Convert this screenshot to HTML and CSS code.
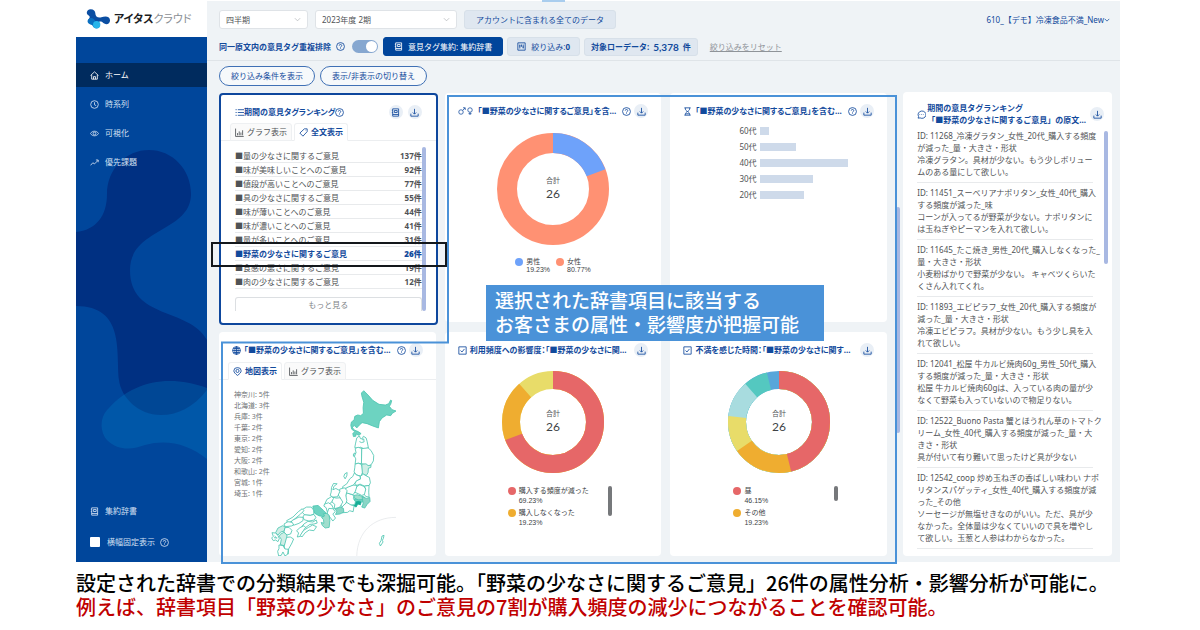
FILE: index.html
```html
<!DOCTYPE html>
<html lang="ja">
<head>
<meta charset="utf-8">
<title>アイタスクラウド</title>
<link rel="stylesheet" href="styles.css">
</head>
<body>
<svg class="defs" aria-hidden="true">
  <symbol id="i-help" viewBox="0 0 16 16"><circle cx="8" cy="8" r="7"/><path d="M5.8 6.4a2.2 2.2 0 1 1 3.2 2c-.7.4-1 .8-1 1.5M8 11.4v1.1"/></symbol>
  <symbol id="i-down" viewBox="0 0 16 16"><path d="M8 1.500v9M5 8l3 3 3-3M1.500 10v4.500h13V10"/></symbol>
  <symbol id="i-book" viewBox="0 0 16 16"><path d="M3 1.500h10.500v13H3zM3 11.500h10.500M6 4.500h5v3.500H6zM1.500 4H3M1.500 8H3"/></symbol>
  <symbol id="i-filter" viewBox="0 0 16 16"><path d="M1.500 1.500h13v13h-13zM5 4.500v7M8 4.500v4M11 4.500v7M3.800 7h2.400M9.800 9h2.400"/></symbol>
  <symbol id="i-home" viewBox="0 0 16 16"><path d="M1 8l7-6.500L15 8M3 7v7.500h10V7M6.300 14.500V10h3.400v4.500"/></symbol>
  <symbol id="i-clock" viewBox="0 0 16 16"><circle cx="8" cy="8" r="6.800"/><path d="M8 4v4.500l3 1.500"/></symbol>
  <symbol id="i-eye" viewBox="0 0 16 16"><path d="M.8 8C4 2.600 12 2.600 15.200 8 12 13.400 4 13.400.8 8z"/><circle cx="8" cy="8" r="2.500"/></symbol>
  <symbol id="i-trend" viewBox="0 0 16 16"><path d="M1 13l4-4.500 3 2L14.500 4M10.500 3.500h4v4"/></symbol>
  <symbol id="i-list" viewBox="0 0 16 16"><path d="M5 3h11M5 8h11M5 13h11M1 3h2M1 8h2M1 13h2"/></symbol>
  <symbol id="i-chart" viewBox="0 0 16 16"><path d="M1 1v14h14.500M4.500 13V9M7.500 13V6M10.500 13V8M13.500 13V4"/></symbol>
  <symbol id="i-tag" viewBox="0 0 16 16"><path d="M9.500 1.500h5v5L7 14.500 1.500 9zM11.500 4.500h.5"/></symbol>
  <symbol id="i-globe" viewBox="0 0 16 16"><circle cx="8" cy="8" r="7"/><path d="M1 8h14M8 1v14M2.300 4.500h11.400M2.300 11.500h11.400M8 1C4 4.500 4 11.500 8 15M8 1c4 3.500 4 10.500 0 14"/></symbol>
  <symbol id="i-pin" viewBox="0 0 16 16"><path d="M8 15C4 12 1.500 9.500 1.500 6.800a6.500 5.800 0 0 1 13 0C14.500 9.500 12 12 8 15z"/><circle cx="8" cy="7" r="2.800"/></symbol>
  <symbol id="i-check" viewBox="0 0 16 16"><path d="M1.500 1.500h13v13h-13zM4.500 8l2.500 2.700 4.500-5.500"/></symbol>
  <symbol id="i-hour" viewBox="0 0 16 16"><path d="M2.500 1.500h11M2.500 14.500h11M4 1.500c0 4 1.500 5 4 6.500 2.500-1.500 4-2.500 4-6.500M4 14.500c0-4 1.500-5 4-6.500 2.500 1.500 4 2.500 4 6.500M5.500 12h5"/></symbol>
  <symbol id="i-sex" viewBox="0 0 30 16"><circle cx="6" cy="10" r="4.500"/><path d="M9.300 6.700L14 2M10 1.500h4.500V6"/><circle cx="24" cy="6" r="4.500"/><path d="M24 10.500V16M21 13.300h6"/></symbol>
  <symbol id="i-chat" viewBox="0 0 16 16"><path d="M2 14.500l.8-3A7 6.500 0 1 1 5.500 14zM4.500 8h1M7.500 8h1M10.500 8h1"/></symbol>
  <symbol id="i-caret" viewBox="0 0 16 16"><path d="M2 5l6 6 6-6"/></symbol>
</svg>

<main class="slide">
<div class="app">
  <aside class="side">
    <div class="logo">
      <svg class="logo-mark" viewBox="0 0 75 60" aria-hidden="true">
        <path d="M14 1c9 0 14 5 14 12 0 10 7 14 18 12 10-3 24-5 26 8 1 12-12 16-20 9-7-6-12-6-17 1-3 5-7 5-14 3C6 42 3 36 9 29c4-5 2-8-3-11C-2 12 4 1 14 1z" fill="#0b4ea2"/>
        <path d="M9 29c8-5 17 2 19 8 5 2 13 2 14 10 0 11-13 15-20 7-2-4-3-6-7-7C3 45 2 34 9 29z" fill="#0a6fc0"/>
        <circle cx="32" cy="47" r="11" fill="#27b4ea"/>
      </svg>
      <span class="logo-text"><b>アイタス</b>クラウド</span>
    </div>
    <nav class="nav">
      <svg class="blobs" viewBox="0 0 131 525" preserveAspectRatio="none" aria-hidden="true">
        <path d="M31 157C31 132 50 113 73 113s42 19 42 44c0 38-61 34-61 76 0 50 59 37 77 70v50c-14 18-30 25-46 25-23 0-40-18-42-35-3-28 6-74-43-74v-74c20-2 31-16 31-38z" fill="#003082"/>
        <path d="M131 351c-40-15-76-5-98 20-10 9-9 24-2 32 12 12 27 9 38 5 22-6 43-1 62 14z" fill="#0084c8" fill-opacity=".28"/>
      </svg>
      <a class="nav-item on" href="#"><svg class="ic"><use href="#i-home"/></svg>ホーム</a>
      <a class="nav-item" href="#"><svg class="ic"><use href="#i-clock"/></svg>時系列</a>
      <a class="nav-item" href="#"><svg class="ic"><use href="#i-eye"/></svg>可視化</a>
      <a class="nav-item" href="#"><svg class="ic"><use href="#i-trend"/></svg>優先課題</a>
      <a class="nav-item bottom" href="#"><svg class="ic"><use href="#i-book"/></svg>集約辞書</a>
      <label class="nav-item fix"><input type="checkbox" class="fix-box">横幅固定表示<svg class="ic"><use href="#i-help"/></svg></label>
    </nav>
  </aside>

  <div class="body">
    <header class="top">
      <div class="row">
        <span class="select s1"><select aria-label="期間単位"><option>四半期</option></select><svg class="ic"><use href="#i-caret"/></svg></span>
        <span class="select s2"><select aria-label="期間"><option>2023年度 2期</option></select><svg class="ic"><use href="#i-caret"/></svg></span>
        <button class="chip wide">アカウントに含まれる全てのデータ</button>
        <button class="account">610_【デモ】冷凍食品不満_New<svg class="ic xs"><use href="#i-caret"/></svg></button>
      </div>
      <div class="row second">
        <label class="dedupe" for="dedupe">同一原文内の意見タグ重複排除<svg class="ic"><use href="#i-help"/></svg></label>
        <input id="dedupe" type="checkbox" class="switch" checked>
        <button class="chip dark"><svg class="ic"><use href="#i-book"/></svg>意見タグ集約: 集約辞書</button>
        <button class="chip"><svg class="ic"><use href="#i-filter"/></svg><span>絞り込み:<b>0</b></span></button>
        <span class="chip raw"><b>対象ローデータ:</b><b class="num">5,378</b><b>件</b></span>
        <a class="reset" href="#">絞り込みをリセット</a>
      </div>
    </header>
    <div class="row pills">
      <button class="pill">絞り込み条件を表示</button>
      <button class="pill">表示/非表示の切り替え</button>
    </div>

    <div class="content">
      <div class="cards">
        <section class="card ranking">
          <div class="head"><svg class="ic"><use href="#i-list"/></svg><h2>期間の意見タグランキング</h2><svg class="ic"><use href="#i-help"/></svg>
            <button class="round push" aria-label="辞書"><svg class="ic"><use href="#i-book"/></svg></button>
            <button class="round" aria-label="ダウンロード"><svg class="ic"><use href="#i-down"/></svg></button></div>
          <div class="tabs"><button class="tab"><svg class="ic"><use href="#i-chart"/></svg>グラフ表示</button><button class="tab on"><svg class="ic"><use href="#i-tag"/></svg>全文表示</button></div>
          <div class="rank-wrap">
            <ul class="rank">
              <li><span>■量の少なさに関するご意見</span><b>137件</b></li>
              <li><span>■味が美味しいことへのご意見</span><b>92件</b></li>
              <li><span>■値段が高いことへのご意見</span><b>77件</b></li>
              <li><span>■具の少なさに関するご意見</span><b>55件</b></li>
              <li><span>■味が薄いことへのご意見</span><b>44件</b></li>
              <li><span>■味が濃いことへのご意見</span><b>41件</b></li>
              <li><span>■量が多いことへのご意見</span><b>31件</b></li>
              <li class="sel"><span>■野菜の少なさに関するご意見</span><b>26件</b></li>
              <li><span>■食感の悪さに関するご意見</span><b>19件</b></li>
              <li><span>■肉の少なさに関するご意見</span><b>12件</b></li>
            </ul>
            <button class="more">もっと見る</button>
          </div>
        </section>

        <section class="card">
          <div class="head"><svg class="ic sex"><use href="#i-sex"/></svg><h2>「■野菜の少なさに関するご意見」を含...</h2><svg class="ic push"><use href="#i-help"/></svg><button class="round" aria-label="ダウンロード"><svg class="ic"><use href="#i-down"/></svg></button></div>
          <svg class="donut big" viewBox="0 0 112 112">
            <g fill="none" stroke-width="20" transform="rotate(-90 56 56)">
              <circle cx="56" cy="56" r="46" pathLength="100" stroke="#ff9173"/>
              <circle cx="56" cy="56" r="46" pathLength="100" stroke="#6ea2fa" stroke-dasharray="19.23 80.77"/>
            </g>
            <text x="56" y="50" class="d-label">合計</text><text x="56" y="65" class="d-num">26</text>
          </svg>
          <ul class="legend inline">
            <li><i class="dot blue"></i><span>男性<br>19.23%</span></li>
            <li><i class="dot coral"></i><span>女性<br>80.77%</span></li>
          </ul>
        </section>

        <section class="card">
          <div class="head"><svg class="ic"><use href="#i-hour"/></svg><h2>「■野菜の少なさに関するご意見」を含む...</h2><svg class="ic push"><use href="#i-help"/></svg><button class="round" aria-label="ダウンロード"><svg class="ic"><use href="#i-down"/></svg></button></div>
          <ul class="bars">
            <li><span>60代</span><i style="width:10%"></i></li>
            <li><span>50代</span><i style="width:40%"></i></li>
            <li><span>40代</span><i style="width:100%"></i></li>
            <li><span>30代</span><i style="width:60%"></i></li>
            <li><span>20代</span><i style="width:50%"></i></li>
          </ul>
        </section>

        <section class="card map-card">
          <div class="head"><svg class="ic"><use href="#i-globe"/></svg><h2>「■野菜の少なさに関するご意見」を含む...</h2><svg class="ic push"><use href="#i-help"/></svg><button class="round" aria-label="ダウンロード"><svg class="ic"><use href="#i-down"/></svg></button></div>
          <div class="tabs"><button class="tab on"><svg class="ic"><use href="#i-pin"/></svg>地図表示</button><button class="tab"><svg class="ic"><use href="#i-chart"/></svg>グラフ表示</button></div>
          <div class="map-row">
            <ul class="prefs">
              <li>神奈川: 5件</li><li>北海道: 3件</li><li>兵庫: 3件</li><li>千葉: 2件</li><li>東京: 2件</li><li>愛知: 2件</li><li>大阪: 2件</li><li>和歌山: 2件</li><li>宮城: 1件</li><li>埼玉: 1件</li>
            </ul>
            <svg class="map" viewBox="115 160 385 502" role="img" aria-label="都道府県別の件数">
              <g stroke="#4cc5b0" stroke-width="2.500" stroke-linejoin="round" fill="#fff">
                <path fill="#6dd3c1" d="M397 165L410 178 424 194 443 206 462 208 472 204 478 193 481 195 478 206 474 212 482 222 494 226 483 233 478 240 466 238 452 247 444 258 441 277 424 271 407 264 392 261 384 268 376 277 370 270 362 274 368 283 380 288 389 294 382 299 374 295 373 302 366 303 364 294 370 288 361 281 358 269 360 259 368 253 370 242 379 238 388 240 396 233 395 216 397 200 391 180 390 172z"/>
                <path d="M372 325l4-18 8-6 3 8 5 1 4-8 8 5 3 10 4 20-12 3-12-5-8 3-9-2zM384 318l6 3 8-2-1-9-5 3"/>
                <path d="M371 339l9-4 11 4v34l-1 12-10-2-9 3 2-16-5-10 6-8z"/>
                <path d="M391 339l19-2 9 8 8 15-1 16-7 12-8 4-8-5-13-2z"/>
                <path d="M371 386l9-3 9 3 3 8 2 16-6 12-14-4-6-9 2-12z"/>
                <path fill="#d0eee6" d="M391 386l13-1 6 5 9-1-1 7-7 2-1 13-5 9-12-5z"/>
                <path d="M369 412l5 6 12 4 1 8-13 8-9 12-14 6-16 4-2-6 13-9 9-15 9-7z"/>
                <path d="M387 422l9-6 10 6 8 4 3 16-4 8-14 2-13-6-11 4-4-6 4-8 12-5z"/>
                <path d="M385 448l13 5 5 8-1 15-11 4-10-5-12-5 6-16z"/>
                <path d="M403 461l-4-9 14-2-1 20 1 15-10-2-4-6z"/>
                <path fill="#a0decd" d="M367 480l11-2 12 4 9 3-3 7-14 2-13-6z"/>
                <path fill="#6dd3c1" d="M369 490l13 4 12-2 3 6-10 2-17-2z"/>
                <path fill="#16ad96" stroke="#16ad96" d="M368 501l12-3 9 2-2 8-8-2-5 9-8-5z"/>
                <path fill="#8ad6c6" d="M392 484l14 5 9-3 1 12-9 9-7 11-9-3 4-10-1-8z"/>
                <path d="M344 471l16 6 7 3-1 10 6 9-2 9-13 1-12-7-7-9 5-10z"/>
                <path d="M347 456l18-7 12 1-5 17-7 11-21-6-5-8z"/>
                <path d="M325 461l14-4 8 9-4 14 3 15-4 15-10 5-9-14 3-14-6-9z"/>
                <path d="M334 512l12-11 13 8 9 2-3 18-10-3-7 5-16 1-3-12z"/>
                <path fill="#8ad6c6" d="M311 520l15-5 10 4 1 11-12 6-13 1 4-8z"/>
                <path d="M325 515l9-15-8-13-12 1-10-3-3 14 9 8-2 13 15-4z"/>
                <path d="M304 485l14-1 8-18-13-7-9 4 3-10 10-8-11-1-6 12-1 14-3 10z"/>
                <path d="M286 492l15-9 5 6-7 13-10 5-10 1z"/>
                <path d="M279 506l12-4 10 7 5 11-10 14-9-5-3-12-7-5z"/>
                <path d="M292 519l13 1 6 9-7 7 8 12-8 9-9-12-8-12z"/>
                <path fill="#6dd3c1" d="M244 512l16-2 6 6 10 9 8 8-7 11-15-3-12-7-5-12z"/>
                <path fill="#a0decd" d="M276 535l10-1 7 7 2 14-2 21-12 2-9-8-3-9 8 3-1-11-6-7 9-4z"/>
                <path d="M213 522l12-7 14 0 7 9 1 12-9 4-18-1-8-8z"/>
                <path d="M218 538l18 2 11-3 6 9-5 8-16 3-14-4-4-8z"/>
                <path d="M184 545l16-16 12-9 5 6-10 10-11 9-14 12-13 6-4-7z"/>
                <path d="M182 555l20-10 13 1-1 10-12 8-14 5-14-2z"/>
                <path d="M157 566l12-7 13 2 4 8-7 3-18 2z"/>
                <path d="M217 566l12-8 15 2 10-6 3 9-10 3-12 1-12 9-10 4-2-7z"/>
                <path d="M205 577l12-6 5 5-8 12-7 15-10 2 4-12-6-7z"/>
                <path d="M216 585l15-9 12-7 12 5-8 12-14-2-12 8-10 13-5-5z"/>
                <path fill="#d0eee6" d="M139 578l14-7 8 3-3 13-11 3-8 9-7-7z"/>
                <path d="M160 577l12-1 9 9-4 11-12 3-8-9z"/>
                <path fill="#d0eee6" d="M146 597l11-6 9 8-2 23-7 9-11-3 3-16-6-9z"/>
                <path d="M121 592l10 1 8 7 4 10-4 9-7-5-7 2-5-8 5-5zM129 602l6 6M127 607l10 1"/>
                <path d="M165 606l11-1 10 6-5 12-10 18-1 15-9-4-3-20z"/>
                <path d="M142 629l12 2 6 10 10 1-2 15-8 5-6-12-5 10-8 2-3-14 4-8z"/>
                <path d="M340 415l7-4-1 10-5 9-4-7z"/>
                <path d="M366 355l5-3-1 9-4 1zM452 602l6-2-2 9-3 6 2 5-8 12-3-8 5-8z"/>
              </g>
              <path d="M494 546c-68 0-116 43-118 116" fill="none" stroke="#dfe3e5" stroke-width="2"/>
            </svg>
          </div>
        </section>

        <section class="card">
          <div class="head"><svg class="ic"><use href="#i-check"/></svg><h2>利用頻度への影響度：「■野菜の少なさに関...</h2><button class="round push" aria-label="ダウンロード"><svg class="ic"><use href="#i-down"/></svg></button></div>
          <svg class="donut" viewBox="0 0 102 102">
            <g fill="none" stroke-width="18" transform="rotate(-90 51 51)">
              <circle cx="51" cy="51" r="42" pathLength="100" stroke="#e8dc69"/>
              <circle cx="51" cy="51" r="42" pathLength="100" stroke="#efad30" stroke-dasharray="88.46 11.54"/>
              <circle cx="51" cy="51" r="42" pathLength="100" stroke="#e66768" stroke-dasharray="69.23 30.77"/>
            </g>
            <text x="51" y="45" class="d-label">合計</text><text x="51" y="60" class="d-num">26</text>
          </svg>
          <div class="legend-row">
            <ul class="legend">
              <li><i class="dot red"></i><span>購入する頻度が減った<br>69.23%</span></li>
              <li><i class="dot amber"></i><span>購入しなくなった<br>19.23%</span></li>
            </ul>
            <i class="thumb"></i>
          </div>
        </section>

        <section class="card">
          <div class="head"><svg class="ic"><use href="#i-check"/></svg><h2>不満を感じた時間：「■野菜の少なさに関す...</h2><button class="round push" aria-label="ダウンロード"><svg class="ic"><use href="#i-down"/></svg></button></div>
          <svg class="donut" viewBox="0 0 102 102">
            <g fill="none" stroke-width="18" transform="rotate(-90 51 51)">
              <circle cx="51" cy="51" r="42" pathLength="100" stroke="#58a6da"/>
              <circle cx="51" cy="51" r="42" pathLength="100" stroke="#54c8c0" stroke-dasharray="96.15 3.85"/>
              <circle cx="51" cy="51" r="42" pathLength="100" stroke="#a8dcdf" stroke-dasharray="88.46 11.54"/>
              <circle cx="51" cy="51" r="42" pathLength="100" stroke="#e8dc69" stroke-dasharray="76.92 23.08"/>
              <circle cx="51" cy="51" r="42" pathLength="100" stroke="#efad30" stroke-dasharray="65.38 34.62"/>
              <circle cx="51" cy="51" r="42" pathLength="100" stroke="#e66768" stroke-dasharray="46.15 53.85"/>
            </g>
            <text x="51" y="45" class="d-label">合計</text><text x="51" y="60" class="d-num">26</text>
          </svg>
          <div class="legend-row">
            <ul class="legend">
              <li><i class="dot red"></i><span>昼<br>46.15%</span></li>
              <li><i class="dot amber"></i><span>その他<br>19.23%</span></li>
            </ul>
            <i class="thumb short"></i>
          </div>
        </section>
      </div>

      <section class="card voices">
        <div class="head tall"><svg class="ic"><use href="#i-chat"/></svg><h2>期間の意見タグランキング<br>「■野菜の少なさに関するご意見」の原文...</h2><button class="round push" aria-label="ダウンロード"><svg class="ic"><use href="#i-down"/></svg></button></div>
        <div class="voice-list">
          <p>ID: 11268_冷凍グラタン_女性_20代_購入する頻度<br>が減った_量・大きさ・形状<br>冷凍グラタン。具材が少ない。もう少しボリュー<br>ムのある量にして欲しい。</p>
          <p>ID: 11451_スーベリアナポリタン_女性_40代_購入<br>する頻度が減った_味<br>コーンが入ってるが野菜が少ない。ナポリタンに<br>は玉ねぎやピーマンを入れて欲しい。</p>
          <p>ID: 11645_たこ焼き_男性_20代_購入しなくなった_<br>量・大きさ・形状<br>小麦粉ばかりで野菜が少ない。 キャベツくらいた<br>くさん入れてくれ。</p>
          <p>ID: 11893_エビピラフ_女性_20代_購入する頻度が<br>減った_量・大きさ・形状<br>冷凍エビピラフ。具材が少ない。もう少し具を入<br>れて欲しい。</p>
          <p>ID: 12041_松屋 牛カルビ焼肉60g_男性_50代_購入<br>する頻度が減った_量・大きさ・形状<br>松屋 牛カルビ焼肉60gは、入っている肉の量が少<br>なくて野菜も入っていないので物足りない。</p>
          <p>ID: 12522_Buono Pasta 蟹とほうれん草のトマトク<br>リーム_女性_40代_購入する頻度が減った_量・大<br>きさ・形状<br>具が付いて有り難いて思ったけど具が少ない</p>
          <p>ID: 12542_coop 炒め玉ねぎの香ばしい味わい ナポ<br>リタンスパゲッティ_女性_40代_購入する頻度が減<br>った_その他<br>ソーセージが無塩せきなのがいい。ただ、具が少<br>なかった。全体量は少なくていいので具を増やし<br>て欲しい。玉葱と人参はわからなかった。</p>
        </div>
      </section>
    </div>
  </div>

  <svg class="frame" viewBox="0 0 678 470" preserveAspectRatio="none" aria-hidden="true"><path d="M228 2H676V468H2V248H228z"/></svg>
  <div class="pick"></div>
  <div class="callout">選択された辞書項目に該当する<br>お客さまの属性・影響度が把握可能</div>
</div>
<div class="caption">
  <p>設定された辞書での分類結果でも深掘可能。「野菜の少なさに関するご意見」26件の属性分析・影響分析が可能に。</p>
  <p class="accent">例えば、辞書項目「野菜の少なさ」のご意見の7割が購入頻度の減少につながることを確認可能。</p>
</div>
</main>
</body>
</html>
```
FILE: styles.css
```css
* { box-sizing: border-box; }
body {
  margin: 0;
  background: #fff;
  color: #505356;
  font: 8px/12px "Noto Sans", "Noto Sans CJK JP", sans-serif;
}
button, select, input { font: inherit; color: inherit; margin: 0; }
button { border: 0; background: none; padding: 0; white-space: nowrap; cursor: pointer; }
ul { list-style: none; margin: 0; padding: 0; }
h2, p { margin: 0; }
a { color: inherit; text-decoration: none; }
.defs { display: none; }
.ic { width: 9px; height: 9px; flex: none; fill: none; stroke: currentColor; stroke-width: 1.5; }
.ic.xs { width: 6px; height: 6px; stroke-width: 2; }

.slide { padding: 1px 80px 0 76px; }
.app { position: relative; display: grid; grid-template-columns: 131px minmax(0, 1fr); background: #eff3f6; }

/* sidebar */
.side { display: flex; flex-direction: column; background: #fff; }
.logo { display: flex; align-items: center; gap: 3px; height: 36px; padding-left: 10px; }
.logo-mark { width: 25px; height: 20px; flex: none; }
.logo-text { color: #8b8f94; font-size: 11px; line-height: 16px; white-space: nowrap; font-feature-settings: "palt"; }
.logo-text b { color: #1b1d22; }
.nav { position: relative; flex: 1; display: flex; flex-direction: column; gap: 5px; padding: 26px 0 8px; background: #00469b; color: #d3e0f2; }
.blobs { position: absolute; inset: 0; width: 100%; height: 100%; }
.nav-item { position: relative; display: flex; align-items: center; gap: 6px; height: 24px; padding-left: 14px; }
.nav-item.on { background: #002b5e; color: #fff; }
.nav-item.bottom { margin-top: auto; }
.nav-item.fix { gap: 5px; margin-top: 2px; }
.fix-box { appearance: none; width: 10px; height: 10px; margin-right: 2px; background: #fff; border-radius: 1px; }

/* top bars */
.top { padding: 9px 10px 4px 12px; border-bottom: 1px solid #dfe4e8; }
.top::before { content: ""; position: absolute; top: -1px; left: 466px; width: 23px; height: 2px; background: #a9cdee; }
.row { display: flex; align-items: center; gap: 7px; }
.row.second { gap: 4px; margin-top: 8px; }
.select { position: relative; display: flex; align-items: center; background: #fff; border: 1px solid #dfe3e7; border-radius: 3px; }
.select select { appearance: none; width: 100%; height: 17px; padding: 0 6px; border: 0; background: none; outline: 0; }
.select .ic { position: absolute; right: 6px; width: 7px; height: 7px; color: #a9adb1; pointer-events: none; }
.s1 { width: 89px; }
.s2 { width: 142px; }
.chip { display: flex; align-items: center; justify-content: center; gap: 5px; height: 19px; padding: 0 9px; background: #dfe7f0; border: 1px solid #d7e0e9; border-radius: 3px; color: #124a9c; white-space: nowrap; }
.chip.wide { width: 152px; }
.chip.dark { padding: 0 10px; background: #00459b; border-color: #00459b; color: #fff; }
.chip.raw { gap: 4px; height: 18px; padding: 0 6px; }
.chip .num { font: 700 10px/12px Lato, sans-serif; }
.account { display: flex; align-items: center; margin-left: auto; color: #124a9c; }
.dedupe { display: flex; align-items: center; gap: 5px; color: #124a9c; font-weight: 700; white-space: nowrap; }
.switch { appearance: none; display: flex; width: 26px; height: 13px; margin: 0 1px 0 3px; padding: 1px; border-radius: 7px; background: #86a7d0; }
.switch::before { content: ""; width: 11px; height: 11px; margin-left: auto; border-radius: 50%; background: #fff; }
.reset { margin-left: 8px; color: #8f9499; text-decoration: underline; }
.pills { gap: 5px; padding: 5px 12px 7px; }
.pill { height: 20px; padding: 0 11px; border: 1px solid #3f70b5; border-radius: 10px; background: #f6f9fb; color: #124a9c; }

/* cards */
.content { display: grid; grid-template-columns: minmax(0, 32fr) minmax(0, 10fr); gap: 16px; padding: 0 8px 6px 12px; }
.cards { position: relative; display: grid; grid-template-columns: repeat(3, minmax(0, 1fr)); grid-template-rows: minmax(229px, auto) minmax(224px, auto); gap: 10px 9px; }
.cards::after { content: ""; position: absolute; top: 114px; right: -13px; width: 4px; height: 226px; border-radius: 2px; background: #a8b8e2; }
.card { display: flex; flex-direction: column; min-width: 0; padding: 8px 13px 0 13px; background: #fff; border-radius: 4px; }
.head { display: flex; align-items: center; gap: 3px; height: 20px; color: #124a9c; }
.head h2 { font-size: 8px; line-height: 12px; font-weight: 700; white-space: nowrap; }
.cards h2 { font-feature-settings: "palt"; }
.head .sex { width: 15px; height: 8px; margin-right: 2px; }
.push { margin-left: auto; }
.round { display: grid; place-items: center; width: 14px; height: 14px; flex: none; border-radius: 50%; background: #e9eff6; color: #124a9c; }
.tabs { display: flex; gap: 2px; margin: 2px -13px 0; padding: 0 9px; border-bottom: 1px solid #eceef0; }
.tab { display: flex; align-items: center; gap: 3px; height: 18px; padding: 0 4px; margin-bottom: -1px; border: 1px solid #eef0f2; border-radius: 3px 3px 0 0; background: #fafafa; }
.tab.on { background: #fff; border-bottom-color: #fff; color: #124a9c; font-weight: 700; }

.ranking { position: relative; margin: 0 -2px -3px 0; padding: 7px 14px 0; border: 2px solid #0e479d; }
.ranking .head { gap: 0; }
.ranking .round + .round { margin-left: 5px; }
.ranking .tabs { margin: 1px -14px 0; }
.rank-wrap { position: relative; margin-top: 8px; }
.rank-wrap::after { content: ""; position: absolute; top: -2px; right: -4px; bottom: 0; width: 4px; border-radius: 2px; background: #a8b8e2; }
.rank li { display: flex; justify-content: space-between; height: 14px; line-height: 13px; border-bottom: 1px solid #e8eaec; white-space: nowrap; }
.rank .sel { color: #124a9c; font-weight: 700; }
.more { width: 100%; height: 14px; margin-top: 8px; border: 1px solid #dcdfe2; border-bottom: 0; border-radius: 3px 3px 0 0; color: #808488; }

.donut { width: 102px; height: 102px; margin: 11px auto 0; }
.donut.big { width: 112px; height: 112px; margin-top: 12px; }
.d-label { font-size: 7px; text-anchor: middle; fill: #505356; }
.d-num { font: 12px Lato, sans-serif; text-anchor: middle; fill: #404346; }
.legend { font: 7px/10px "Liberation Sans", "Noto Sans CJK JP", sans-serif; color: #404346; }
.legend li { display: flex; align-items: flex-start; gap: 3px; white-space: nowrap; }
.legend.inline { display: flex; justify-content: center; gap: 6px; margin-top: 13px; line-height: 8px; }
.dot { width: 8px; height: 8px; border-radius: 50%; flex: none; }
.legend-row .dot { margin-top: 1px; }
.blue { background: #6ea2fa; }
.coral { background: #ff9173; }
.red { background: #e66768; }
.amber { background: #efad30; }
.legend-row { display: flex; justify-content: space-between; margin: 13px 36px 0 50px; }
.legend-row .legend { display: grid; gap: 2px; }
.thumb { width: 4px; height: 30px; border-radius: 2px; background: #76787b; }
.thumb.short { height: 15px; }
.bars { display: grid; gap: 4px; padding: 4px 26px 0 56px; }
.bars li { display: grid; grid-template-columns: 16px 1fr; gap: 5px; align-items: center; }
.bars span { white-space: nowrap; }
.bars i { height: 8px; background: #cedaea; }

.map-card { overflow: hidden; }
.map-row { display: flex; justify-content: space-between; height: 167px; padding: 9px 36px 0 2px; }
.prefs { font-size: 7px; line-height: 11px; white-space: nowrap; color: #707376; }
.map { width: 128px; height: 167px; flex: none; }

/* comments */
.voices { margin-top: -1px; padding: 11px 13px 0 14px; position: relative; }
.voices::after { content: ""; position: absolute; top: 39px; right: 4px; width: 4px; height: 133px; border-radius: 2px; background: #a8b8e2; }
.head.tall { height: 22px; gap: 1px; }
.head.tall .round { margin-right: -5px; }
.voice-list { margin: 5px 6px 0 0; }
.voice-list p { white-space: nowrap; padding-bottom: 4px; margin-bottom: 4px; border-bottom: 1px solid #e8eaec; }

/* annotations drawn over the dashboard */
.frame { position: absolute; top: 93px; left: 144px; width: calc(100% - 366px); height: 471px; fill: none; stroke: #4a92d8; stroke-width: 2; }
.pick { position: absolute; top: 241px; left: 135px; width: 236px; height: 25px; border: 2px solid #14181c; }
.callout { position: absolute; top: 284px; left: 410px; padding: 3px 25px 5px 9px; background: #4a92d8; color: #fff; font: 500 19px/24px "Noto Sans CJK JP", sans-serif; white-space: nowrap; }
.caption { padding-top: 9px; font: 500 20px/24px "Noto Sans CJK JP", sans-serif; color: #000; white-space: nowrap; }
.caption .accent { color: #c00000; }
```
